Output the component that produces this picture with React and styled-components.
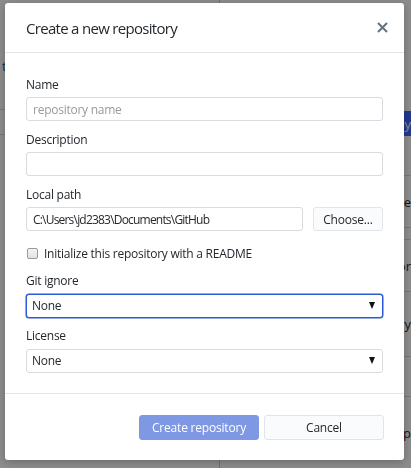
import React from "react";
import styled, { createGlobalStyle } from "styled-components";

const Global = createGlobalStyle`
  html, body { margin: 0; padding: 0; }
  body {
    width: 411px;
    height: 468px;
    overflow: hidden;
    background: #ffffff;
    font-family: "Open Sans", "Noto Sans", Arial, sans-serif;
  }
  * { box-sizing: border-box; }
`;

/* ---------- background app (behind the overlay) ---------- */
const AppShell = styled.div`
  width: 411px;
  height: 468px;
  display: grid;
  grid-template-columns: 220px 1fr;
  background: #fff;
  color: #24292e;
  font-size: 12px;
`;

const SideCol = styled.div`
  display: flex;
  flex-direction: column;
  border-right: 1px solid #c8cdd4;
`;

const MainCol = styled.div`
  display: flex;
  flex-direction: column;
  align-items: flex-end;
`;

const BgRow = styled.div`
  height: ${(p) => p.$h}px;
  width: 100%;
  display: flex;
  align-items: center;
  justify-content: ${(p) => (p.$right ? "flex-end" : "flex-start")};
  padding: 0 ${(p) => (p.$right ? "0" : "2px")};
  border-bottom: ${(p) => (p.$line ? "1px solid #d6dade" : "none")};
  background: ${(p) => p.$bg || "transparent"};
  color: ${(p) => p.$color || "#24292e"};
  font-size: 13px;
  white-space: nowrap;
  overflow: hidden;
`;

const Overlay = styled.div`
  position: fixed;
  inset: 0;
  background: rgba(0, 0, 0, 0.45);
  display: flex;
  align-items: flex-start;
  justify-content: flex-start;
  padding: 3px 0 0 5px;
`;

/* ---------- dialog ---------- */
const Dialog = styled.div`
  width: 399px;
  height: 457px;
  background: #fff;
  border-radius: 3px;
  box-shadow: 0 2px 8px rgba(0, 0, 0, 0.25);
  display: flex;
  flex-direction: column;
  color: #24292e;
  letter-spacing: -0.25px;
`;

const Header = styled.header`
  height: 50px;
  flex: none;
  display: flex;
  align-items: center;
  justify-content: space-between;
  padding: 0 15px 0 21px;
  border-bottom: 1px solid #e1e4e8;
`;

const Title = styled.h1`
  margin: 0;
  font-size: 15px;
  font-weight: 400;
  color: #24292e;
  letter-spacing: -0.7px;
`;

const CloseButton = styled.button`
  border: none;
  background: none;
  padding: 0;
  width: 14px;
  height: 14px;
  display: flex;
  align-items: center;
  justify-content: center;
  cursor: pointer;
`;

const Body = styled.div`
  flex: 1;
  padding: 24px 21px 0 21px;
  display: flex;
  flex-direction: column;
  border-bottom: 1px solid #e1e4e8;
`;

const Field = styled.div`
  display: flex;
  flex-direction: column;
  margin-bottom: 11px;
`;

const Label = styled.label`
  font-size: 12px;
  line-height: 16px;
  color: #24292e;
  margin-bottom: 4px;
`;

const TextInput = styled.input`
  height: 24px;
  width: 100%;
  border: 1px solid #d8dce1;
  border-radius: 3px;
  padding: 0 6px;
  font-family: inherit;
  font-size: 12px;
  letter-spacing: ${(p) => (p.$tight ? "-0.8px" : "-0.25px")};
  color: #24292e;
  background: #fff;
  outline: none;
  &::placeholder { color: #9a9a9a; }
`;

const PathRow = styled.div`
  display: flex;
  gap: 10px;
`;

const Button = styled.button`
  height: ${(p) => p.$h || 24}px;
  border-radius: 3px;
  font-family: inherit;
  font-size: 12px;
  letter-spacing: -0.2px;
  padding: 0 6px;
  cursor: pointer;
  border: 1px solid ${(p) => (p.$primary ? "#7e98e4" : "#e1e4e8")};
  background: ${(p) => (p.$primary ? "#7e98e4" : "#fafbfc")};
  color: ${(p) => (p.$primary ? "#ffffff" : "#24292e")};
  width: ${(p) => p.$w}px;
  flex: none;
`;

const CheckRow = styled.label`
  height: 22px;
  display: flex;
  align-items: center;
  gap: 6px;
  font-size: 12px;
  color: #24292e;
  margin-bottom: 9px;
`;

const CheckBox = styled.span`
  width: 11px;
  height: 11px;
  border: 1px solid #9a9a9a;
  border-radius: 2px;
  background: linear-gradient(#f4f4f4, #e2e2e2);
  flex: none;
  margin-left: 1px;
`;

const SelectWrap = styled.div`
  position: relative;
  height: 24px;
`;

const Select = styled.select`
  appearance: none;
  -webkit-appearance: none;
  width: 100%;
  height: 100%;
  border: 1px solid ${(p) => (p.$focused ? "#2a5ad6" : "#d8dce1")};
  box-shadow: ${(p) => (p.$focused ? "0 0 0 0.5px #2a5ad6" : "none")};
  border-radius: 3px;
  padding: 0 5px;
  font-family: inherit;
  font-size: 12px;
  letter-spacing: -0.25px;
  color: #24292e;
  background: #fff;
  outline: none;
`;

const Arrow = styled.span`
  position: absolute;
  right: 8px;
  top: 9px;
  width: 0;
  height: 0;
  border-left: 3.5px solid transparent;
  border-right: 3.5px solid transparent;
  border-top: 7px solid #111;
  pointer-events: none;
`;

const Footer = styled.footer`
  height: 66px;
  flex: none;
  display: flex;
  justify-content: flex-end;
  align-items: flex-start;
  gap: 5px;
  padding: 21px 20px 0 0;
`;

function SelectField({ label, focused }) {
  return (
    <Field>
      <Label>{label}</Label>
      <SelectWrap>
        <Select $focused={focused} defaultValue="None">
          <option>None</option>
        </Select>
        <Arrow />
      </SelectWrap>
    </Field>
  );
}

export default function App() {
  return (
    <>
      <Global />
      <AppShell>
        <SideCol>
          <BgRow $h={22} />
          <BgRow $h={88} $line>
            <span style={{ color: "#0b4ea2" }}>ta</span>
          </BgRow>
          <BgRow $h={25} $line />
          <BgRow $h={333} />
        </SideCol>
        <MainCol>
          <BgRow $h={111} />
          <BgRow $h={25} $bg="#4166ff" $color="#fff" $right>Sy</BgRow>
          <BgRow $h={40} $line />
          <BgRow $h={52} $line $right>ne</BgRow>
          <BgRow $h={12} $line />
          <BgRow $h={52} $line $right>or</BgRow>
          <BgRow $h={65} $line $right>ry</BgRow>
          <BgRow $h={40} $line />
          <BgRow $h={71} $right>App</BgRow>
        </MainCol>
      </AppShell>
      <Overlay>
        <Dialog role="dialog">
          <Header>
            <Title>Create a new repository</Title>
            <CloseButton aria-label="Close">
              <svg width="11" height="11" viewBox="0 0 11 11">
                <path d="M1 1 L10 10 M10 1 L1 10" stroke="#6a737d" strokeWidth="2.1" strokeLinecap="butt" />
              </svg>
            </CloseButton>
          </Header>
          <Body>
            <Field>
              <Label>Name</Label>
              <TextInput placeholder="repository name" />
            </Field>
            <Field>
              <Label>Description</Label>
              <TextInput />
            </Field>
            <Field>
              <Label>Local path</Label>
              <PathRow>
                <TextInput $tight defaultValue="C:\Users\jd2383\Documents\GitHub" />
                <Button $w={70}>Choose...</Button>
              </PathRow>
            </Field>
            <CheckRow>
              <CheckBox />
              Initialize this repository with a README
            </CheckRow>
            <SelectField label="Git ignore" focused />
            <SelectField label="License" />
          </Body>
          <Footer>
            <Button $primary $w={120} $h={25}>Create repository</Button>
            <Button $w={120} $h={25}>Cancel</Button>
          </Footer>
        </Dialog>
      </Overlay>
    </>
  );
}
